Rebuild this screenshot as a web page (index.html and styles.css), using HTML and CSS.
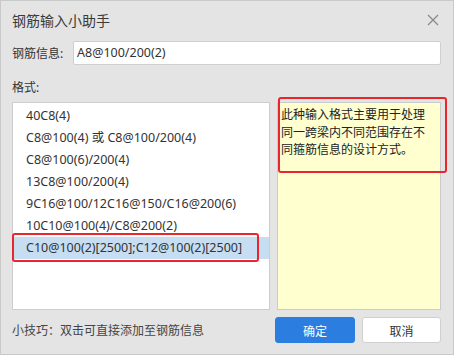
FILE: index.html
```html
<!DOCTYPE html>
<html lang="zh-CN">
  <head>
    <meta charset="UTF-8" />
    <title>钢筋输入小助手</title>
    <link rel="stylesheet" href="styles.css">
  </head>
  <body>
    <div class="dialog">
      <div class="header">
        <span class="title">钢筋输入小助手</span>
        <svg class="close" width="12" height="12" viewBox="0 0 12 12">
          <path d="M1 1 L11 11 M11 1 L1 11" stroke="#8a8a8a" stroke-width="1.3" fill="none" />
        </svg>
      </div>

      <div class="field">
        <label class="field-label">钢筋信息:</label>
        <div class="input">A8@100/200(2)</div>
      </div>

      <div class="section-label">格式:</div>

      <div class="main">
        <div class="list">
          <div class="list-item">40C8(4)</div>
          <div class="list-item">C8@100(4) 或 C8@100/200(4)</div>
          <div class="list-item">C8@100(6)/200(4)</div>
          <div class="list-item">13C8@100/200(4)</div>
          <div class="list-item">9C16@100/12C16@150/C16@200(6)</div>
          <div class="list-item">10C10@100(4)/C8@200(2)</div>
          <div class="list-item selected">C10@100(2)[2500];C12@100(2)[2500]</div>
        </div>

        <div class="desc">
          <div class="desc-text">此种输入格式主要用于处理同一跨梁内不同范围存在不同箍筋信息的设计方式。</div>
        </div>
      </div>

      <div class="footer">
        <span class="tip">小技巧：双击可直接添加至钢筋信息</span>
        <div class="buttons">
          <button class="btn btn-primary">确定</button>
          <button class="btn">取消</button>
        </div>
      </div>
    </div>
  </body>
</html>
```

FILE: styles.css
```css
body {
  margin: 0;
  font-family: "Noto Sans", "Noto Sans CJK SC", sans-serif;
  color: #333;
}

.dialog {
  width: 454px;
  height: 355px;
  box-sizing: border-box;
  border: 1px solid #c9c9c9;
  background: #e4e4e4;
  padding: 0 12px 0 11px;
}

.header {
  height: 38px;
  display: flex;
  align-items: center;
  justify-content: space-between;
}

.title {
  font-size: 14px;
  color: #3a3a3a;
}

.close {
  margin-right: 2px;
}

.field {
  margin-top: 2px;
  display: flex;
  align-items: center;
}

.field-label {
  width: 61px;
  font-size: 12px;
}

.input {
  flex: 1;
  height: 24px;
  box-sizing: border-box;
  border: 1px solid #cfcfcf;
  border-radius: 2px;
  background: white;
  padding-left: 3px;
  font-size: 12.5px;
  line-height: 22px;
}

.section-label {
  margin-top: 13px;
  height: 20px;
  line-height: 20px;
  font-size: 12px;
  margin-bottom: 4px;
}

.main {
  display: flex;
  gap: 7px;
  height: 208px;
}

.list {
  width: 258px;
  box-sizing: border-box;
  border: 1px solid #cdcdcd;
  background: white;
  padding-top: 2px;
}

.list-item {
  height: 22px;
  line-height: 22px;
  padding-left: 13px;
  font-size: 12.5px;
  white-space: nowrap;
}

.list-item.selected {
  position: relative;
  background: #c7ddf2;
}

/* annotation box round the selected row */
.list-item.selected::after {
  content: "";
  position: absolute;
  left: -1px;
  right: 10px;
  top: -4px;
  bottom: -3px;
  border: 2px solid #e8262b;
  border-radius: 3px;
}

.desc {
  flex: 1;
  position: relative;
  box-sizing: border-box;
  border: 1px solid #cbcbcb;
  background: #ffffd0;
  padding: 3px 10px 0 3px;
}

.desc::after {
  content: "";
  position: absolute;
  left: 0;
  right: -7px;
  top: -6px;
  height: 72px;
  border: 2px solid #e8262b;
  border-radius: 3px;
}

.desc-text {
  font-size: 12px;
  line-height: 17.5px;
  color: #222;
}

.footer {
  margin-top: 7px;
  display: flex;
  align-items: center;
  justify-content: space-between;
}

.tip {
  font-size: 12px;
  color: #444;
}

.buttons {
  display: flex;
  gap: 7px;
}

.btn {
  width: 79px;
  height: 26px;
  border: 1px solid #cfcfcf;
  border-radius: 3px;
  background: white;
  font-family: "Noto Sans CJK SC", sans-serif;
  font-size: 12px;
  color: #333;
  padding: 0;
}

.btn-primary {
  width: 80px;
  background: #2b7de0;
  border-color: #2b7de0;
  color: white;
}
```
